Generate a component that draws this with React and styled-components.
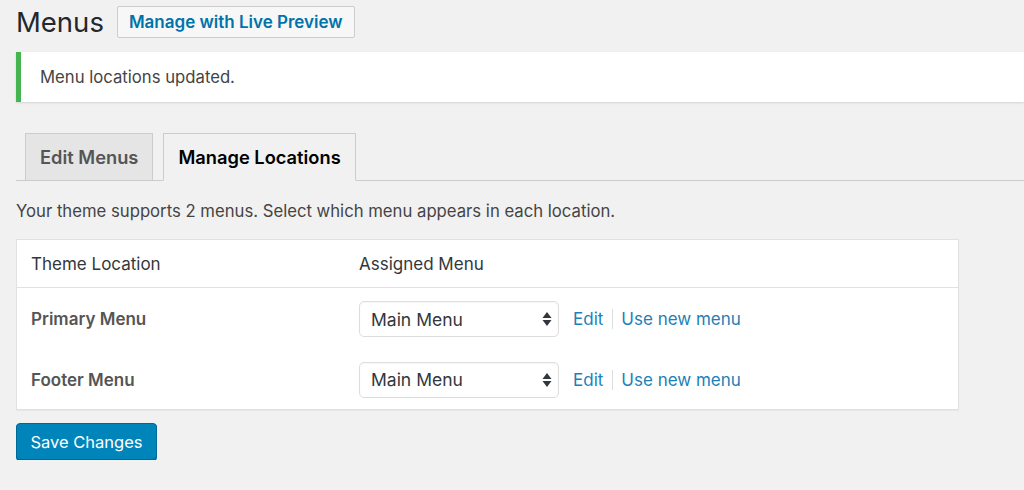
import React from 'react';
import styled, { createGlobalStyle } from 'styled-components';

const GlobalStyle = createGlobalStyle`
  html, body {
    margin: 0;
    padding: 0;
    background: #f1f1f1;
  }
  body {
    font-family: Inter, "Open Sans", "Liberation Sans", sans-serif;
    color: #444;
  }
`;

const Wrap = styled.div`
  padding: 6px 0 0 16px;
  overflow: hidden;
`;

const Header = styled.div`
  display: flex;
  align-items: center;
  gap: 13px;
  height: 32px;
`;

const Title = styled.h1`
  margin: 0;
  font-size: 27.5px;
  font-weight: 400;
  color: #23282d;
  line-height: 32px;
`;

const OutlineButton = styled.a`
  display: inline-flex;
  align-items: center;
  height: 32px;
  box-sizing: border-box;
  padding: 0 11px;
  border: 1px solid #ccc;
  border-radius: 2px;
  background: #f7f7f7;
  color: #0073aa;
  font-size: 17px;
  font-weight: 600;
  text-decoration: none;
`;

const Notice = styled.div`
  margin-top: 14px;
  height: 50px;
  box-sizing: border-box;
  display: flex;
  align-items: center;
  padding-left: 19px;
  background: #fff;
  border-left: 5px solid #46b450;
  box-shadow: 0 1px 2px rgba(0, 0, 0, 0.12);
  font-size: 16.7px;
  color: #444;
`;

const TabBar = styled.div`
  margin-top: 31px;
  display: flex;
  gap: 10px;
  padding-left: 9px;
  border-bottom: 1px solid #ccc;
  height: 47px;
`;

const Tab = styled.a`
  display: flex;
  align-items: center;
  box-sizing: border-box;
  height: ${({ $active }) => ($active ? '48px' : '47px')};
  padding: 0 14px;
  border: 1px solid #ccc;
  border-bottom: ${({ $active }) => ($active ? '1px solid #f1f1f1' : 'none')};
  background: ${({ $active }) => ($active ? '#f1f1f1' : '#e5e5e5')};
  color: ${({ $active }) => ($active ? '#000' : '#555')};
  font-size: 18.3px;
  font-weight: 600;
  text-decoration: none;
`;

const Description = styled.p`
  margin: 20px 0 0;
  font-size: 16.7px;
  color: #444;
  line-height: 20px;
`;

const Table = styled.div`
  margin-top: 18px;
  width: 943px;
  background: #fff;
  border: 1px solid #e1e1e1;
  box-sizing: border-box;
  box-shadow: 0 1px 1px rgba(0, 0, 0, 0.04);
`;

const Row = styled.div`
  display: grid;
  grid-template-columns: 342px 1fr;
  align-items: center;
  height: ${({ $h }) => $h}px;
  border-bottom: ${({ $head }) => ($head ? '1px solid #e1e1e1' : 'none')};
`;

const HeadCell = styled.div`
  padding-left: ${({ $first }) => ($first ? '14px' : '0')};
  font-size: 17px;
  color: #32373c;
`;

const LocationName = styled.div`
  padding-left: 14px;
  font-size: 17px;
  font-weight: 600;
  color: #555;
`;

const Controls = styled.div`
  display: flex;
  align-items: center;
`;

const SelectBox = styled.div`
  position: relative;
  width: 200px;
  height: 36px;
  box-sizing: border-box;
  border: 1px solid #ddd;
  border-radius: 5px;
  background: #fff;
  display: flex;
  align-items: center;
  padding-left: 11px;
  font-size: 17.5px;
  color: #32373c;
  box-shadow: inset 0 1px 2px rgba(0, 0, 0, 0.04);
`;

const Arrows = styled.svg`
  position: absolute;
  right: 6px;
  top: 50%;
  transform: translateY(-50%);
`;

const Links = styled.div`
  display: flex;
  align-items: center;
  margin-left: 14px;
  font-size: 17px;
`;

const Link = styled.a`
  color: #1e80b8;
  text-decoration: none;
`;

const Sep = styled.span`
  width: 1px;
  height: 20px;
  background: #ddd;
  margin: 0 8px 0 9px;
`;

const SaveButton = styled.button`
  margin-top: 13px;
  height: 37px;
  width: 141px;
  box-sizing: border-box;
  border: 1px solid #006799;
  border-radius: 4px;
  background: #0085ba;
  box-shadow: 0 1px 0 #006799;
  color: #fff;
  font-family: inherit;
  font-size: 16.5px;
  padding: 0;
  cursor: pointer;
`;

const locations = [
  { name: 'Primary Menu', h: 62 },
  { name: 'Footer Menu', h: 59 },
];

const MenuSelect = () => (
  <SelectBox>
    Main Menu
    <Arrows width="10" height="16" viewBox="0 0 10 16">
      <path d="M5 1 L9.5 7 H0.5 Z" fill="#32373c" />
      <path d="M5 15 L9.5 9 H0.5 Z" fill="#32373c" />
    </Arrows>
  </SelectBox>
);

export default function App() {
  return (
    <>
      <GlobalStyle />
      <Wrap>
        <Header>
          <Title>Menus</Title>
          <OutlineButton href="#">Manage with Live Preview</OutlineButton>
        </Header>
        <Notice>Menu locations updated.</Notice>
        <TabBar>
          <Tab href="#">Edit Menus</Tab>
          <Tab href="#" $active>Manage Locations</Tab>
        </TabBar>
        <Description>
          Your theme supports 2 menus. Select which menu appears in each location.
        </Description>
        <Table>
          <Row $h={47} $head>
            <HeadCell $first>Theme Location</HeadCell>
            <HeadCell>Assigned Menu</HeadCell>
          </Row>
          {locations.map((loc) => (
            <Row key={loc.name} $h={loc.h}>
              <LocationName>{loc.name}</LocationName>
              <Controls>
                <MenuSelect />
                <Links>
                  <Link href="#">Edit</Link>
                  <Sep />
                  <Link href="#">Use new menu</Link>
                </Links>
              </Controls>
            </Row>
          ))}
        </Table>
        <SaveButton>Save Changes</SaveButton>
      </Wrap>
    </>
  );
}
